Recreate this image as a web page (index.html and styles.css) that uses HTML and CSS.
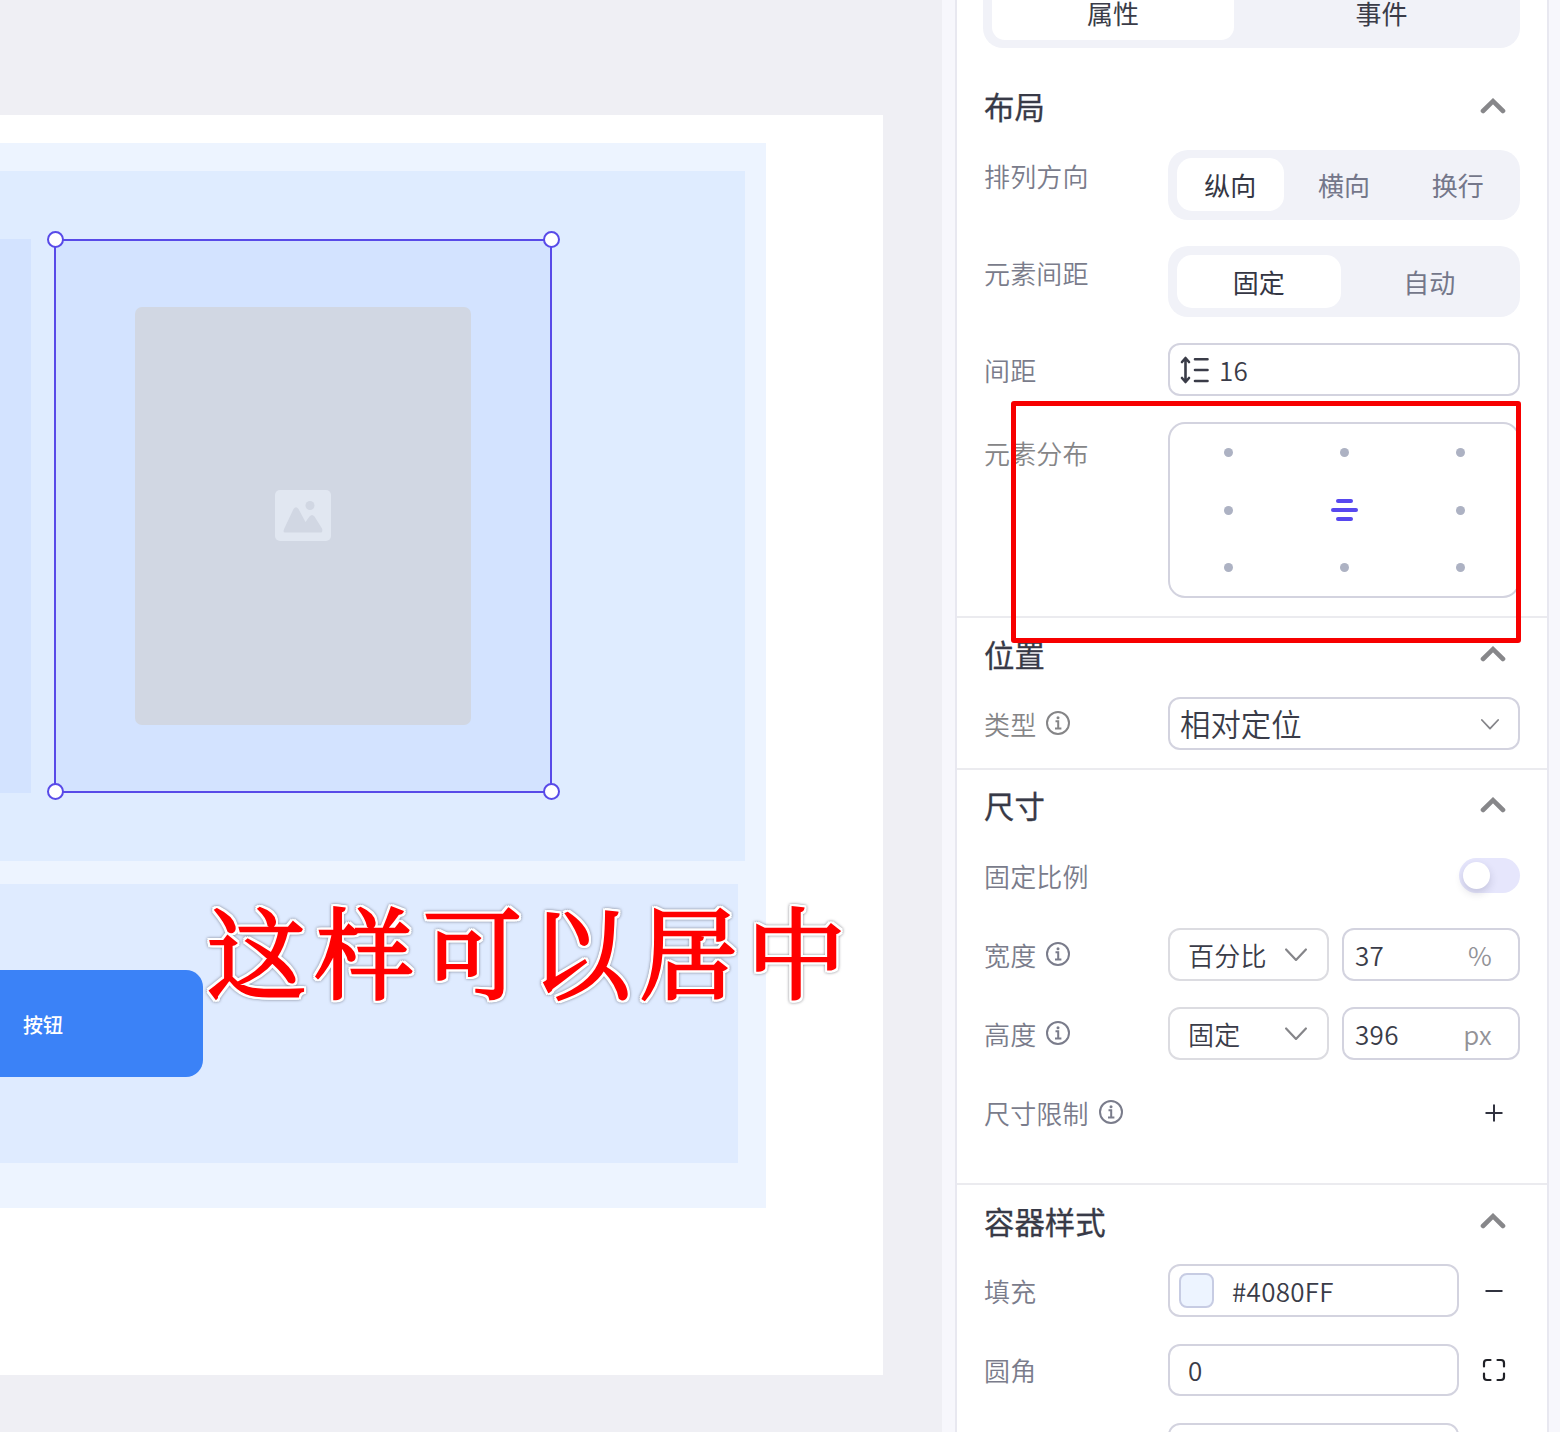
FILE: index.html
```html
<!DOCTYPE html>
<html lang="zh-CN">
<head>
<meta charset="utf-8">
<title>属性</title>
<link rel="stylesheet" href="styles.css">
</head>
<body>
<svg class="defs" width="0" height="0" aria-hidden="true">
  <symbol id="chev-up" viewBox="0 0 26 16"><path d="M3 13 13 3.2 23 13" fill="none" stroke="currentColor" stroke-width="4.6" stroke-linecap="round" stroke-linejoin="miter"/></symbol>
  <symbol id="chev-down" viewBox="0 0 20 14"><path d="M1 2 10 11.5 19 2" fill="none" stroke="currentColor" stroke-width="2" stroke-linecap="round" stroke-linejoin="round"/></symbol>
  <symbol id="info" viewBox="0 0 26 26"><g fill="none" stroke="currentColor" stroke-width="2"><circle cx="13" cy="13" r="11"/><path d="M10.500 11.200H13.200V18.200M10 18.400H16.400"/></g><circle cx="13" cy="7.800" r="1.500" fill="currentColor"/></symbol>
</svg>
<div class="app">
  <main class="canvas">
    <div class="page">
      <div class="container">
        <div class="row-main">
          <div class="cell cell-left"></div>
          <div class="cell cell-selected">
            <div class="image-box">
              <svg width="56" height="51" viewBox="0 0 56 51"><rect width="56" height="51" rx="5" fill="#e1e7f1"/><path d="M8.500 41Q9 39 10 37L18.500 19Q21 15.500 23.500 19L30.500 32 34.500 26.500Q37 23.500 39.500 26.500L47 38.500Q48 41 46.500 42.500H10Q8.500 42.500 8.500 41Z" fill="#d1d7e3"/><circle cx="35" cy="15.500" r="4.500" fill="#d1d7e3"/></svg>
            </div>
            <i class="handle tl"></i><i class="handle tr"></i><i class="handle bl"></i><i class="handle br"></i>
          </div>
        </div>
        <div class="row-button"><div class="button">按钮</div></div>
      </div>
    </div>
  </main>
  <aside class="panel">
    <div class="tabs"><span class="tab on">属性</span><span class="tab">事件</span></div>

    <section class="section s-layout">
      <header class="title"><h2>布局</h2><svg class="up"><use href="#chev-up"/></svg></header>
      <div class="row r-seg first">
        <span class="label">排列方向</span>
        <div class="seg seg3"><span class="on">纵向</span><span>横向</span><span>换行</span></div>
      </div>
      <div class="row r-seg">
        <span class="label">元素间距</span>
        <div class="seg seg2"><span class="on">固定</span><span>自动</span></div>
      </div>
      <div class="row">
        <span class="label">间距</span>
        <div class="field gap-field">
          <svg width="30" height="28" viewBox="0 0 30 28" fill="none" stroke="currentColor" stroke-width="2.600" stroke-linecap="round" stroke-linejoin="round"><path d="M5.500 3V25M2 6 5.500 2 9 6M2 22 5.500 26 9 22M15 3.200H27.500M15 14H27.500M15 25H27.500"/></svg>
          <span>16</span>
        </div>
      </div>
      <div class="row r-align">
        <span class="label plain">元素分布</span>
        <div class="align-grid">
          <i></i><i></i><i></i><i></i>
          <b><em></em><em></em><em></em></b>
          <i></i><i></i><i></i><i></i>
        </div>
      </div>
    </section>

    <section class="section s-position">
      <header class="title"><h2>位置</h2><svg class="up"><use href="#chev-up"/></svg></header>
      <div class="row">
        <span class="label plain">类型<svg class="info"><use href="#info"/></svg></span>
        <div class="field select big"><span>相对定位</span><svg class="down small"><use href="#chev-down"/></svg></div>
      </div>
    </section>

    <section class="section s-size">
      <header class="title"><h2>尺寸</h2><svg class="up"><use href="#chev-up"/></svg></header>
      <div class="row r-ratio"><span class="label">固定比例</span><div class="toggle"><i></i></div></div>
      <div class="row">
        <span class="label">宽度<svg class="info"><use href="#info"/></svg></span>
        <div class="pair">
          <div class="field select soft"><span>百分比</span><svg class="down"><use href="#chev-down"/></svg></div>
          <div class="field unit"><span>37</span><small>%</small></div>
        </div>
      </div>
      <div class="row">
        <span class="label">高度<svg class="info"><use href="#info"/></svg></span>
        <div class="pair">
          <div class="field select soft"><span>固定</span><svg class="down"><use href="#chev-down"/></svg></div>
          <div class="field unit"><span>396</span><small>px</small></div>
        </div>
      </div>
      <div class="row">
        <span class="label">尺寸限制<svg class="info"><use href="#info"/></svg></span>
        <svg class="action" viewBox="0 0 26 26"><path d="M4.500 13H21.500M13 4.500V21.500" stroke="currentColor" stroke-width="2"/></svg>
      </div>
    </section>

    <section class="section s-style">
      <header class="title"><h2>容器样式</h2><svg class="up"><use href="#chev-up"/></svg></header>
      <div class="row">
        <span class="label">填充</span>
        <div class="with-action">
          <div class="field fill"><i class="swatch"></i><span>#4080FF</span></div>
          <svg class="action" viewBox="0 0 26 26"><path d="M4.500 13H21.500" stroke="currentColor" stroke-width="2"/></svg>
        </div>
      </div>
      <div class="row r-radius">
        <span class="label">圆角</span>
        <div class="with-action">
          <div class="field"><span>0</span></div>
          <svg class="action dark" viewBox="0 0 26 26"><path d="M3 9.500V6Q3 3 6 3H9.500M16.500 3H20Q23 3 23 6V9.500M23 16.500V20Q23 23 20 23H16.500M9.500 23H6Q3 23 3 20V16.500" fill="none" stroke="currentColor" stroke-width="2.200" stroke-linecap="round"/></svg>
        </div>
      </div>
      <div class="row">
        <span class="label"></span>
        <div class="with-action"><div class="field"></div></div>
      </div>
    </section>
  </aside>
</div>
<div class="mark-box"></div>
<div class="mark-text">这样可以居中</div>
</body>
</html>
```
FILE: styles.css
```css
* { box-sizing: border-box; }
body {
  margin: 0;
  width: 1560px;
  height: 1432px;
  overflow: hidden;
  position: relative;
  background: #f7f7fc;
  color: #3a3c48;
  font: 350 26px/36px "Noto Sans CJK SC DemiLight", "Noto Sans CJK SC", sans-serif;
}
.defs { position: absolute; }
.app { display: flex; height: 1432px; overflow: hidden; }

/* Canvas */
.canvas { width: 942px; padding-top: 115px; background: #efeff4; }
.page { width: 883px; height: 1260px; padding-top: 28px; background: #fff; }
.container { width: 766px; height: 1065px; padding-top: 28px; background: #edf4ff; }
.row-main {
  display: flex;
  gap: 23px;
  width: 745px;
  height: 690px;
  padding-top: 68px;
  background: #dfecff;
}
.cell { height: 554px; background: #d3e3ff; }
.cell-left { width: 31px; }
.cell-selected {
  position: relative;
  width: 498px;
  border: 2px solid #584ae8;
  display: flex;
  align-items: center;
  justify-content: center;
}
.image-box {
  display: flex;
  align-items: center;
  justify-content: center;
  width: 336px;
  height: 418px;
  border-radius: 7px;
  background: #d1d7e3;
}
.image-box svg { margin-top: -1px; }
.handle {
  position: absolute;
  width: 17px;
  height: 17px;
  border: 2px solid #584ae8;
  border-radius: 50%;
  background: #fff;
}
.tl { left: -9px; top: -10px; }
.tr { right: -10px; top: -10px; }
.bl { left: -9px; bottom: -9px; }
.br { right: -10px; bottom: -9px; }
.row-button {
  width: 738px;
  height: 279px;
  margin-top: 23px;
  padding-top: 86px;
  background: #dfebff;
}
.button {
  width: 203px;
  height: 107px;
  padding-left: 23px;
  border-radius: 0 17px 17px 0;
  background: #3b82f7;
  color: #fff;
  font-family: "Noto Sans CJK SC", sans-serif;
  font-size: 20px;
  font-weight: 500;
  line-height: 109px;
}

/* Panel */
.panel {
  width: 594px;
  margin-left: 13px;
  border: solid #e8e8f0;
  border-width: 0 2px;
  background: #fff;
}
.tabs {
  display: flex;
  gap: 18px;
  height: 48px;
  width: 537px;
  margin-left: 26px;
  padding: 0 9px 8px;
  border-radius: 0 0 20px 20px;
  background: #f1f2f8;
}
.tab { flex: 1; text-align: center; line-height: 26px; font-family: "Noto Sans CJK SC", sans-serif; font-weight: 400; }
.tab.on { flex: 0 0 242px; border-radius: 0 0 13px 13px; background: #fff; }
.section { padding: 0 27px; border-bottom: 2px solid #ebebef; }
.s-layout { height: 570px; padding-top: 37px; }
.s-position { height: 152px; padding-top: 16px; }
.s-size { height: 415px; padding-top: 15px; }
.s-style { padding-top: 16px; border: 0; }
.title { display: flex; height: 44px; align-items: center; justify-content: space-between; }
h2 {
  margin: -4px 0 0;
  font-family: "Noto Sans CJK SC", sans-serif;
  font-size: 30.400px;
  font-weight: 400;
  line-height: 44px;
  color: #383a47;
  -webkit-text-stroke: .3px #383a47;
}
.s-layout h2 { margin-top: -2px; }
.up { width: 26px; height: 16px; margin: -5px 14px 0 0; color: #87878a; }
.s-layout .up { margin-top: -3px; }
.row { display: grid; grid-template-columns: 184px 352px; height: 53px; margin-top: 26px; align-items: center; }
.title + .row { margin-top: 19px; }
.s-size .title + .row { height: 35px; margin-top: 29px; }
.label { display: flex; align-items: center; gap: 9px; color: #7a7c8b; line-height: 36px; padding-top: 1px; letter-spacing: .15px; }
.label.plain { color: #858587; }
.info { width: 26px; height: 26px; margin-top: -2px; }
.title + .r-seg { margin-top: 21px; }
.r-seg { height: 71px; }
.r-seg .label { margin-top: -18px; }
.r-seg.first { height: 70px; }
.r-seg.first .label { margin-top: -20px; }
.seg {
  display: flex;
  height: 100%;
  padding: 9px;
  border-radius: 20px;
  background: #f1f2f8;
  color: #74778a;
  font-family: "Noto Sans CJK SC", sans-serif;
  font-weight: 400;
}
.seg span { flex: 1; text-align: center; line-height: 53px; border-radius: 15px; }
.seg .on { background: #fff; color: #343643; }
.seg3 { gap: 7px; padding-top: 8px; }
.seg2 { gap: 7px; }
.field {
  display: flex;
  align-items: center;
  height: 53px;
  padding: 0 18px;
  border: 2px solid #d3d3df;
  border-radius: 12px;
  line-height: 36px;
  letter-spacing: .3px;
}
.gap-field { padding: 0 10px; gap: 9px; }
.r-align { height: 176px; align-items: start; }
.r-align .label { padding-top: 13px; }
.align-grid {
  display: grid;
  grid-template-columns: repeat(3, 116px);
  grid-template-rows: repeat(3, 57.500px);
  justify-content: center;
  align-content: center;
  place-items: center;
  height: 176px;
  border: 2px solid #d3d3df;
  border-radius: 17px;
}
.align-grid i { width: 9px; height: 9px; border-radius: 50%; background: #adb2c3; }
.align-grid b { display: flex; flex-direction: column; align-items: center; gap: 5px; }
.align-grid em { width: 17px; height: 4px; border-radius: 2px; background: #5748ef; }
.align-grid em:nth-child(2) { width: 27px; }
.select { justify-content: space-between; }
.big { padding: 0 19px 0 10px; font-size: 30.400px; letter-spacing: 0; }
.big span { margin-top: -2px; }
.down { width: 22px; height: 16px; color: #858589; }
.down.small { width: 18px; height: 13px; margin-top: 1px; }
.toggle { justify-self: end; width: 61px; height: 35px; padding: 4px; border-radius: 18px; background: #e6e6fc; }
.toggle i { display: block; width: 27px; height: 27px; border-radius: 50%; background: #fff; box-shadow: 0 4px 8px rgba(40, 40, 80, .18); }
.r-ratio + .row { margin-top: 35px; }
.s-size .r-ratio .label, .s-size .r-ratio .toggle { margin-top: -1px; }
.pair { display: grid; grid-template-columns: 161px 178px; gap: 13px; }
.soft { padding-right: 20px; border-color: #dcdce1; }
.unit { justify-content: space-between; padding: 0 26px 0 11px; }
.unit small { color: #929297; font-size: 26px; }
.action { width: 26px; height: 26px; margin-right: 13px; justify-self: end; color: #30323f; }
.action.dark { color: #202127; }
.with-action { display: flex; align-items: center; justify-content: space-between; }
.with-action .field { width: 291px; }
.s-style .r-radius { margin-top: 27px; height: 52px; }
.r-radius .label { padding: 0; }
.r-radius .field { height: 52px; }
.s-style .r-radius + .row { margin-top: 27px; }
.fill { padding-left: 9px; gap: 18px; }
.swatch { width: 35px; height: 35px; border: 2px solid #c7cce3; border-radius: 8px; background: #edf4ff; }

/* Annotations over the editor */
.mark-box { position: absolute; left: 1011px; top: 401px; width: 510px; height: 242px; border: 5px solid #f70000; border-radius: 3px; }
.mark-text {
  position: absolute;
  left: 207px;
  top: 873px;
  white-space: nowrap;
  font-family: "Noto Serif CJK SC", "Noto Sans CJK SC", serif;
  font-size: 99px;
  font-weight: 400;
  line-height: 150px;
  letter-spacing: 9px;
  color: #f00;
  -webkit-text-stroke: 2.500px #f00;
  filter:
    drop-shadow(2px 0 0 #fff)
    drop-shadow(-2px 0 0 #fff)
    drop-shadow(0 2px 0 #fff)
    drop-shadow(0 -2px 0 #fff)
    drop-shadow(0 0 1.500px rgba(60, 60, 70, .6));
}
```
